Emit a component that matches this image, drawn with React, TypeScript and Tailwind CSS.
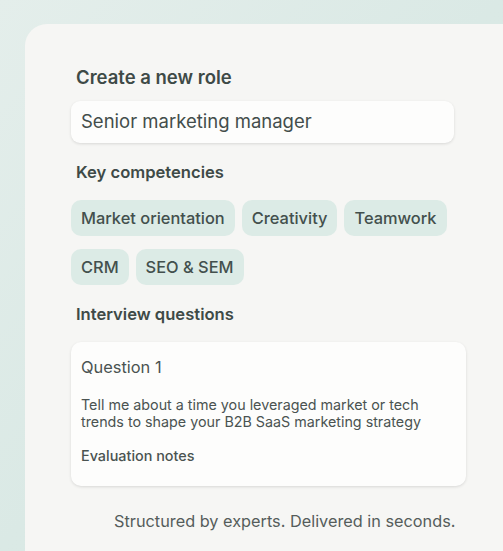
import React from 'react';

const competencies = [
  ['Market orientation', 'Creativity', 'Teamwork'],
  ['CRM', 'SEO & SEM'],
];

export default function App() {
  return (
    <div
      className="w-[503px] h-[551px] overflow-hidden bg-gradient-to-br from-[#e4eeeb] via-[#dae9e5] to-[#d8e8e4] pt-[24px] pl-[25px]"
      style={{ fontFamily: 'Inter, "Noto Sans", sans-serif' }}
    >
      <div className="h-full bg-[#f6f6f4] rounded-tl-[22px] pl-[46px] pt-[42px] text-[#3e4a47]">
        <div className="w-[383px]">
          <h2 className="px-[5px] text-[18.5px] leading-[22px] font-semibold">Create a new role</h2>
          <div className="mt-[13px] h-[42px] bg-[#fdfdfc] rounded-[9px] shadow-[0_1px_3px_rgba(0,0,0,0.12)] flex items-center px-[10px] text-[18.5px] text-[#434d4b]">
            Senior marketing manager
          </div>
          <h3 className="mt-[18px] px-[5px] text-[16.6px] leading-[22px] font-semibold">Key competencies</h3>
          <div className="mt-[17px] flex flex-col gap-[13px]">
            {competencies.map((row, i) => (
              <div key={i} className="flex gap-[7px]">
                {row.map((c) => (
                  <span
                    key={c}
                    className="h-[36px] px-[10px] flex items-center rounded-[10px] bg-[#dcebe6] text-[16.4px] font-medium text-[#43504d]"
                  >
                    {c}
                  </span>
                ))}
              </div>
            ))}
          </div>
          <h3 className="mt-[18px] px-[5px] text-[16.6px] leading-[22px] font-semibold">Interview questions</h3>
        </div>
        <div className="mt-[17px] w-[395px] h-[144px] bg-[#fdfdfc] rounded-[10px] shadow-[0_1px_3px_rgba(0,0,0,0.12)] px-[10px] pt-[14px] text-[#4a5351]">
          <div className="text-[16.4px] leading-[22px]">Question 1</div>
          <p className="mt-[18px] text-[14.3px] leading-[17px]">
            Tell me about a time you leveraged market or tech trends to shape your B2B SaaS marketing strategy
          </p>
          <div className="mt-[17px] text-[14.4px] leading-[18px] font-medium">Evaluation notes</div>
        </div>
        <div className="mt-[24px] pl-[43px] text-[16.3px] leading-[22px] text-[#555d5b]">
          Structured by experts. Delivered in seconds.
        </div>
      </div>
    </div>
  );
}
